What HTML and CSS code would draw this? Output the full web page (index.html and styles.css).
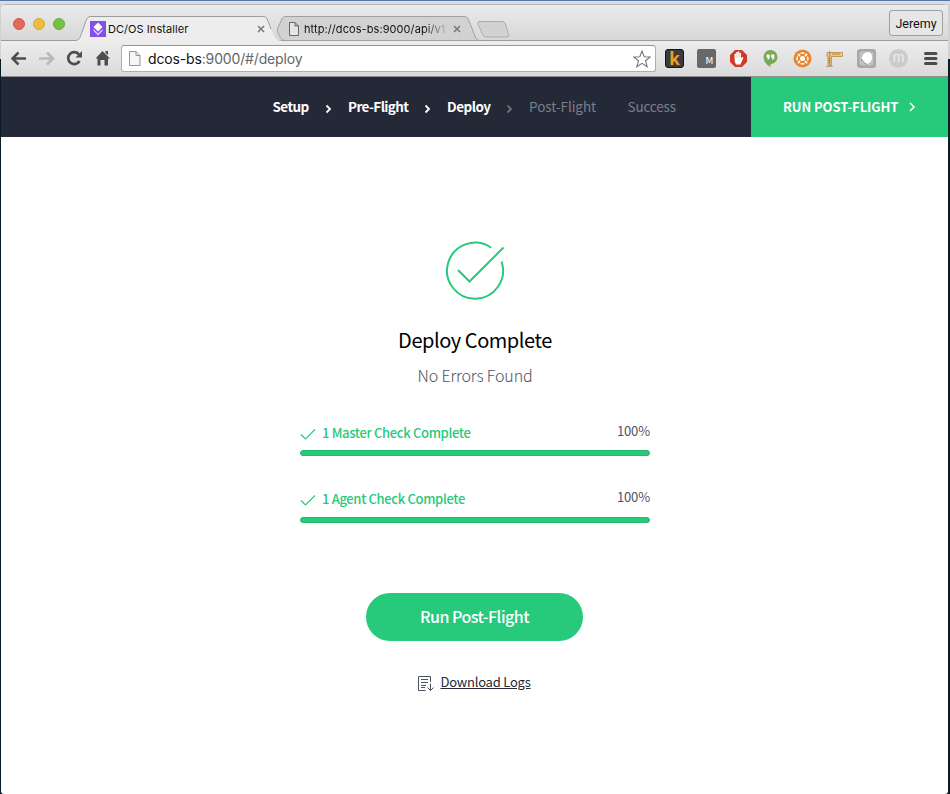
FILE: index.html
```html
<!DOCTYPE html>
<html lang="en">
<head>
<meta charset="utf-8">
<title>DC/OS Installer</title>
<link rel="stylesheet" href="styles.css">
</head>
<body>
<div class="desktop">
<div class="window">
  <div class="tabstrip">
    <div class="lights"><i class="light red"></i><i class="light yellow"></i><i class="light green"></i></div>
    <div class="tab tab-active">
      <svg class="shape" width="206" height="27" viewBox="0 0 206 27"><path d="M0 25.5C5 25.5 5 22 6.500 18.500L11 6C12 3 13 1.500 16 1.500H188C191 1.500 192 3 193 6L199 21C200.500 24 202 25.500 206 25.500V27H0Z" fill="#ededed"/><path d="M0 25.500C5 25.500 5 22 6.500 18.500L11 6C12 3 13 1.500 16 1.500H188C191 1.500 192 3 193 6L196 14" fill="none" stroke="#9d9d9d"/></svg>
      <svg class="favicon" width="16" height="16" viewBox="0 0 16 16"><path d="M0 0H16V16H0Z" fill="#8250e6"/><path d="M8 1.500L12.500 6 8 10.500 3.500 6Z" fill="#fff"/><path d="M3.500 8L8 12.500 12.500 8V10L8 14.500 3.500 10Z" fill="#dccdfb"/></svg>
      <span class="tab-title">DC/OS Installer</span>
      <svg class="close" width="8" height="8" viewBox="0 0 8 8"><path d="M1 1L7 7M7 1L1 7" stroke="#777" stroke-width="1.500"/></svg>
    </div>
    <div class="tab tab-back">
      <svg class="shape" width="204" height="27" viewBox="0 0 204 27"><path d="M0 15L4 6C5 3 6 1.500 9 1.500H187C190 1.500 191 3 192 6L198 21C199 24 200 25.500 204 25.500H8C4 25 3 22 2 20Z" fill="#d2d2d2" stroke="#a0a0a0"/></svg>
      <svg class="page" width="10" height="14" viewBox="0 0 10 14"><path d="M.5.500H6L9.500 4V13.500H.500ZM6 .5V4H9.500" fill="#e5e5e5" stroke="#666"/></svg>
      <span class="tab-title fade">http://dcos-bs:9000/api/v1</span>
      <svg class="close" width="8" height="8" viewBox="0 0 8 8"><path d="M1 1L7 7M7 1L1 7" stroke="#777" stroke-width="1.500"/></svg>
    </div>
    <svg class="newtab" width="33" height="17" viewBox="0 0 33 17"><path d="M3 .5H25Q27.500.500 28.500 3L31.500 13Q32.500 16 30 16H9Q6.500 16 5.500 13L1 3Q0 .5 3 .5Z" fill="#d2d2d2" stroke="#acacac"/></svg>
    <div class="profile">Jeremy</div>
  </div>
  <div class="toolbar">
    <svg class="nav" width="120" height="35" viewBox="0 0 120 35"><g fill="none" stroke-width="2.500"><path d="M25 17.500H12M17.500 11.500L11.500 17.500 17.500 23.500" stroke="#4e4e4e"/><path d="M38 17.500H51M46 11.500L52 17.500 46 23.500" stroke="#b9b9b9"/><path d="M78.500 20A6 6 0 1 1 78 13.500" stroke="#4e4e4e" stroke-width="2.700"/></g><path d="M81 10V16.500H74.500Z" fill="#4e4e4e"/><path d="M101.500 10L109 17.500H107V24.500H103.500V19H99.500V24.500H96.500V17.500H94.500ZM104.500 10H107V14L104.500 12Z" fill="#4e4e4e"/></svg>
    <div class="address">
      <svg class="url-page" width="12" height="15" viewBox="0 0 12 15"><path d="M.5.500H7L11 4.500V14.500H.500ZM7 .5V4.500H11" fill="#f6f6f6" stroke="#949494"/></svg>
      <span class="url"><b>dcos-bs</b>:9000/#/deploy</span>
      <svg class="star" width="18" height="18" viewBox="0 0 18 18"><path d="M9 1L11.200 6.700 17.200 7 12.500 10.800 14.200 16.700 9 13.300 3.800 16.700 5.500 10.800.800 7 6.800 6.700Z" fill="#fff" stroke="#777" stroke-width="1.100"/></svg>
    </div>
    <div class="extensions">
      <span class="ext k">k</span>
      <span class="ext m">M</span>
      <svg class="ext" viewBox="0 0 19 19"><path d="M6 1H13L18 6V13L13 18H6L1 13V6Z" fill="#cf3a2b"/><path d="M5.500 9V5Q6.200 4 7 5V3.500Q8 2.500 8.700 3.500V2.700Q9.700 2 10.400 2.700V4Q11.500 3.200 12 4.200V9L13.500 8Q15 8 14 9.500L11.500 15.500H7Q5.500 13 5.500 9Z" fill="#fff"/><path d="M7.200 4V9M8.900 3V8.500M10.500 3.500V8.500" stroke="#dc9a92" stroke-width=".5"/></svg>
      <svg class="ext" viewBox="0 0 19 19"><path d="M9.500 1A7 7 0 1 1 9.500 15V18Q2.500 14 2.500 8A7 7 0 0 1 9.500 1Z" fill="#78a95b"/><path d="M5.500 5.500H8.700V8.500Q8.700 10 6.700 11V8.500H5.500ZM10.200 5.500H13.400V8.500Q13.400 10 11.400 11V8.500H10.200Z" fill="#fff"/></svg>
      <svg class="ext" viewBox="0 0 19 19"><circle cx="9.500" cy="9.500" r="9" fill="#e38732"/><circle cx="9.500" cy="9.500" r="2.500" fill="#fff"/><path d="M7.500 4.500Q9.500 3.500 11.500 4.500M7.500 14.500Q9.500 15.500 11.500 14.500M4.500 7.500Q3.500 9.500 4.500 11.500M14.500 7.500Q15.500 9.500 14.500 11.500" fill="none" stroke="#fff" stroke-width="1.300"/><path d="M5 5L7 7M12 12L14 14M5 14L7 12M12 7L14 5" stroke="#fff" stroke-width="1.800"/></svg>
      <svg class="ext" viewBox="0 0 19 19"><path d="M2 3.500H17.500V7.500H6.500V17H3V7.500H2Z" fill="#e9c88a" stroke="#bd8b42" stroke-width=".8"/><path d="M4.800 2V17M8 4V6M10 4V6M12 4V6M14 4V6M3 9.500H5M3 11.500H5M3 13.500H5" stroke="#9d6d2b" stroke-width=".7"/><path d="M1 17.500H8" stroke="#aaa"/></svg>
      <svg class="ext" viewBox="0 0 19 19"><rect width="19" height="19" rx="3" fill="#a8a8a8"/><rect x="2.500" y="2.500" width="14" height="14" rx="3" fill="#c2c2c2"/><ellipse cx="10" cy="9" rx="5" ry="6.200" fill="#fff" transform="rotate(20 10 9)"/><path d="M4.500 10Q6 14 10 15.500" stroke="#858585" fill="none"/></svg>
      <span class="ext circle-m">m</span>
      <svg class="ext" viewBox="0 0 19 19"><path d="M4.500 4.500H15M4.500 9.500H15M4.500 14.500H15" stroke="#4b4b4b" stroke-width="3" stroke-linecap="round"/></svg>
    </div>
  </div>
  <header class="header">
    <nav class="steps">
      <span class="step setup">Setup</span>
      <svg class="chev" width="7" height="10" viewBox="0 0 7 10"><path d="M1.500 1.500L5 5 1.500 8.500" fill="none" stroke="#fff" stroke-width="1.800"/></svg>
      <span class="step preflight">Pre-Flight</span>
      <svg class="chev" width="7" height="10" viewBox="0 0 7 10"><path d="M1.500 1.500L5 5 1.500 8.500" fill="none" stroke="#fff" stroke-width="1.800"/></svg>
      <span class="step deploy">Deploy</span>
      <svg class="chev" width="7" height="10" viewBox="0 0 7 10"><path d="M1.500 1.500L5 5 1.500 8.500" fill="none" stroke="#777b84" stroke-width="1.700"/></svg>
      <span class="step muted postflight">Post-Flight</span>
      <span class="step muted">Success</span>
    </nav>
    <div class="header-action"><span>RUN POST-FLIGHT</span><svg width="7" height="10" viewBox="0 0 7 10"><path d="M1 1L5 5 1 9" fill="none" stroke="#fff" stroke-width="1.500"/></svg></div>
  </header>
  <main class="main">
    <svg class="success" width="62" height="62" viewBox="0 0 62 62"><path d="M47.200 7.800A28 28 0 1 0 57.500 21.500M14 30L25.500 41.500 59.500 7.500" fill="none" stroke="#27c97b" stroke-width="2"/></svg>
    <h1>Deploy Complete</h1>
    <p class="sub">No Errors Found</p>
    <section class="check">
      <div class="row"><svg width="16" height="13" viewBox="0 0 16 13"><path d="M1 6.500L5.500 11 15 1.500" fill="none" stroke="#27c97b" stroke-width="1.100"/></svg><span class="name">1 Master Check Complete</span><span class="pct">100%</span></div>
      <div class="bar"></div>
    </section>
    <section class="check second">
      <div class="row"><svg width="16" height="13" viewBox="0 0 16 13"><path d="M1 6.500L5.500 11 15 1.500" fill="none" stroke="#27c97b" stroke-width="1.100"/></svg><span class="name">1 Agent Check Complete</span><span class="pct">100%</span></div>
      <div class="bar"></div>
    </section>
    <div class="button">Run Post-Flight</div>
    <div class="logs"><svg width="18" height="17" viewBox="0 0 18 17"><path d="M8.500 15.500H1.500V1.500H13.500V7M4 4.500H11M4 7.500H11M4 10.500H9M4 12.500H8M13.500 8.500V15.500M10.500 12.500L13.500 15.500 16.500 12.500" fill="none" stroke="#4f5360"/></svg><a>Download Logs</a></div>
  </main>
</div>
</div>
</body>
</html>
```
FILE: styles.css
```css
* { box-sizing: border-box; }
body { margin: 0; }
svg { display: block; flex: none; }
.desktop {
  width: 950px; height: 794px; overflow: hidden;
  padding: 4px 2px 0 1px;
  background: linear-gradient(#5577ae 0 1px, #d9dbe5 1px 4px, #d2d2d2 4px 59px, #0c1c27 59px);
}
.window {
  height: 790px; overflow: hidden; display: flex; flex-direction: column;
  background: #fff; border-radius: 5px 5px 3px 3px;
}
.tabstrip {
  height: 37px; flex: none; display: flex; padding-top: 11px;
  background: linear-gradient(#b5b5b5 0 1px, #ebebeb 1px, #d7d7d7);
  border-bottom: 1px solid #9c9c9c;
  font: 11px Inter, "Liberation Sans", sans-serif; color: #111;
}
.lights { display: flex; gap: 8px; padding: 3px 0 0 12px; width: 74px; }
.light { width: 12px; height: 12px; border-radius: 50%; border: 1px solid; }
.red { background: #e3695a; border-color: #d2594b; }
.yellow { background: #edbd3e; border-color: #dba92e; }
.green { background: #75c148; border-color: #62ad36; }
.tab { position: relative; height: 27px; display: flex; align-items: center; }
.tab > * { position: relative; }
.tab .shape { position: absolute; left: 0; top: 0; }
.tab-active { width: 202px; padding-left: 15px; z-index: 2; }
.tab-back { width: 200px; padding-left: 12px; }
.tab-title { width: 149px; margin-left: 2px; letter-spacing: .06px; white-space: nowrap; }
.tab-back .tab-title { width: 145px; margin-left: 5px; letter-spacing: .08px; }
.tab-back .close { margin-left: 4px; }
.fade { background: linear-gradient(90deg, #111 0 120px, #d2d2d2 145px); background-clip: text; color: transparent; }
.newtab { margin: 6px 0 0; }
.profile {
  margin: -5px 5px 0 auto; width: 54px; height: 26px; line-height: 26px; text-align: center;
  border: 1px solid #a0a0a0; border-radius: 3px; background: #e6e6e6;
  font-family: Roboto, sans-serif; font-size: 12.500px;
}
.toolbar {
  height: 36px; flex: none; display: flex;
  background: linear-gradient(#ededed, #dadada); border-bottom: 1px solid #8e8e8e;
}
.address {
  width: 535px; height: 27px; margin-top: 4px; padding: 0 4px 0 7px; display: flex; align-items: center;
  background: #fff; border: 1px solid #aeaeae; border-top-color: #959595; border-radius: 3px;
}
.url { margin-left: 7px; font: 14px Inter, "Liberation Sans", sans-serif; letter-spacing: -.15px; color: #666; }
.url b { font-weight: 400; color: #111; }
.star { margin-left: auto; }
.extensions { display: flex; gap: 13px; margin: 8px 0 0 9px; }
.ext { width: 19px; height: 19px; flex: none; text-align: center; }
.k { background: #3b3b3b; border: 1px solid #151515; border-radius: 3px; color: #eda01f; font: bold 17px/17px "Open Sans", sans-serif; }
.m { background: #686868; border-radius: 2px; color: #fff; font: 9px/25px "DejaVu Sans", sans-serif; padding-left: 6px; }
.circle-m { background: #cbcbcb; border-radius: 50%; color: #eee; font: 14px/17px "Liberation Sans", sans-serif; }
.header {
  height: 60px; flex: none; display: flex; justify-content: space-between; background: #242938;
  font-family: "Noto Sans CJK SC", "Open Sans", sans-serif; color: #fff; white-space: nowrap;
}
.steps { display: flex; align-items: center; padding-left: 271.500px; font-size: 13.500px; }
.step { height: 60px; line-height: 58px; }
.setup, .preflight, .deploy { font-weight: 700; letter-spacing: -.6px; }
.setup { width: 52.500px; }
.preflight { width: 76px; }
.deploy { width: 59px; letter-spacing: -.5px; }
.muted { color: #7b7f88; letter-spacing: -.15px; }
.postflight { width: 98.500px; letter-spacing: -.05px; }
.chev { margin: 3px 16px 0 0; }
.header-action {
  width: 197px; padding-left: 32px; display: flex; align-items: center; background: #27c97b;
  font-size: 13px; font-weight: 700; letter-spacing: -.07px;
}
.header-action span { width: 126px; margin-top: -2px; }
.main {
  flex: 1; display: flex; flex-direction: column; align-items: center; padding: 103px 0 0 1px;
  font-family: "Noto Sans CJK SC", "Open Sans", sans-serif; white-space: nowrap;
}
h1 { margin: 23px 0 0; font-size: 20px; line-height: 30px; font-weight: 400; letter-spacing: -.45px; color: #000; }
.sub { margin: 8px 0 0; font-size: 16px; line-height: 24px; font-weight: 300; letter-spacing: -.15px; color: #4f5360; }
.check { width: 350px; margin-top: 32px; }
.row { height: 30px; display: flex; align-items: center; color: #27c97b; font-size: 13px; }
.name { margin: -3px 0 0 6px; font-weight: 500; letter-spacing: -.34px; }
.pct { margin: -7px 0 0 auto; letter-spacing: -.15px; color: #4f5360; }
.bar { height: 6px; margin-top: 1px; border-radius: 3px; background: #27c97b; border: 1px solid #23b86f; }
.second { margin-top: 29px; }
.second .bar { margin-top: 2px; }
.button {
  width: 217px; height: 48px; margin: 70px 1px 0 0; border-radius: 24px; background: #27c97b;
  color: #fff; font-size: 16px; line-height: 47px; font-weight: 500; letter-spacing: -.5px; text-align: center;
}
.logs { margin: 31px 2px 0 0; display: flex; align-items: center; gap: 5px; font-size: 13px; line-height: 20px; letter-spacing: -.22px; color: #242938; }
.logs svg { margin-top: 3px; }
.logs a { text-decoration: underline; }
```
